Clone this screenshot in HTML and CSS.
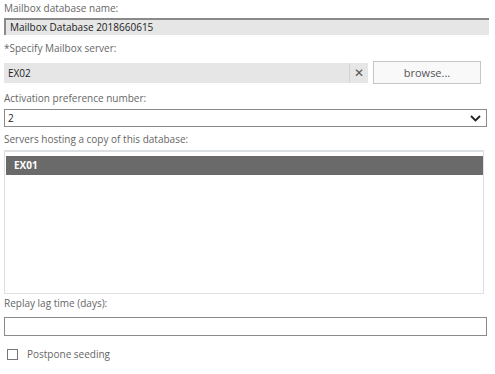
FILE: index.html
```html
<!doctype html>
<html>
<head>
<meta charset="utf-8">
<title>Mailbox database copy</title>
<link rel="stylesheet" href="styles.css">
</head>
<body>
<div class="form">
	<div class="lbl">Mailbox database name:</div>
	<div class="ro">Mailbox Database 2018660615</div>

	<div class="lbl lbl2">*Specify Mailbox server:</div>
	<div class="server">
		<div class="srv-box">
			<span class="srv-txt">EX02</span>
			<span class="clear">&#x2715;</span>
		</div>
		<div class="browse">browse...</div>
	</div>

	<div class="lbl lbl3">Activation preference number:</div>
	<div class="sel">
		<span>2</span>
		<svg class="chev" width="11" height="7" viewBox="0 0 11 7"><path d="M1 1 L5.5 5.5 L10 1" fill="none" stroke="#222" stroke-width="1.8"/></svg>
	</div>

	<div class="lbl lbl4">Servers hosting a copy of this database:</div>
	<div class="list">
		<div class="row-sel">EX01</div>
	</div>

	<div class="lbl lbl5">Replay lag time (days):</div>
	<div class="txt"></div>

	<label class="chk"><span class="box"></span>Postpone seeding</label>
</div>
</body>
</html>
```

FILE: styles.css
```css
* {margin:0; padding:0; box-sizing:border-box;}

body {background:#fff; font-family:"Open Sans", "Noto Sans", sans-serif; font-size:10px; color:#333;}

.form {display:flex; flex-direction:column; padding:1px 0 0 4px; width:490px;}

.lbl {color:#666; height:14px; line-height:14px;}
.lbl2 {margin-top:6px;}
.lbl3 {margin-top:7px;}
.lbl4 {margin-top:5px;}
.lbl5 {margin-top:2px;}

.ro {margin-top:3px; width:485px; height:17px; line-height:15px; padding-left:4px; background:#e6e6e6; border-top:2px solid #8a8a8a; border-left:2px solid #8a8a8a; color:#222;}

.server {display:flex; align-items:center; gap:5px; margin-top:6px; height:23px;}
.srv-box {display:flex; width:364px; height:20px; background:#e6e6e6; align-items:center;}
.srv-txt {flex:1; padding-left:4px; color:#222;}
.clear {width:19px; height:20px; line-height:20px; text-align:center; border-left:1px solid #d4d4d4; color:#555; font-size:12px;}
.browse {width:108px; height:23px; line-height:21px; text-align:center; background:#f9f9f9; border:1px solid #c6c6c6; color:#555; font-size:11px;}

.sel {display:flex; align-items:center; justify-content:space-between; margin-top:4px; width:483px; height:18px; padding:0 5px 0 3px; border:1px solid #8a8a8a; color:#222;}

.list {margin-top:4px; width:480px; height:144px; border:1px solid #dde0e3; border-top-width:2px; padding:4px 0 0 1px;}
.row-sel {height:19px; line-height:19px; padding-left:8px; background:#6a6a6a; color:#fff; font-weight:bold;}

.txt {margin-top:7px; width:483px; height:19px; border:1px solid #8a8a8a;}

.chk {display:flex; align-items:center; gap:9px; margin-top:11px; padding-left:3px; color:#666;}
.box {width:11px; height:11px; border:1px solid #777; background:#fff;}
```
